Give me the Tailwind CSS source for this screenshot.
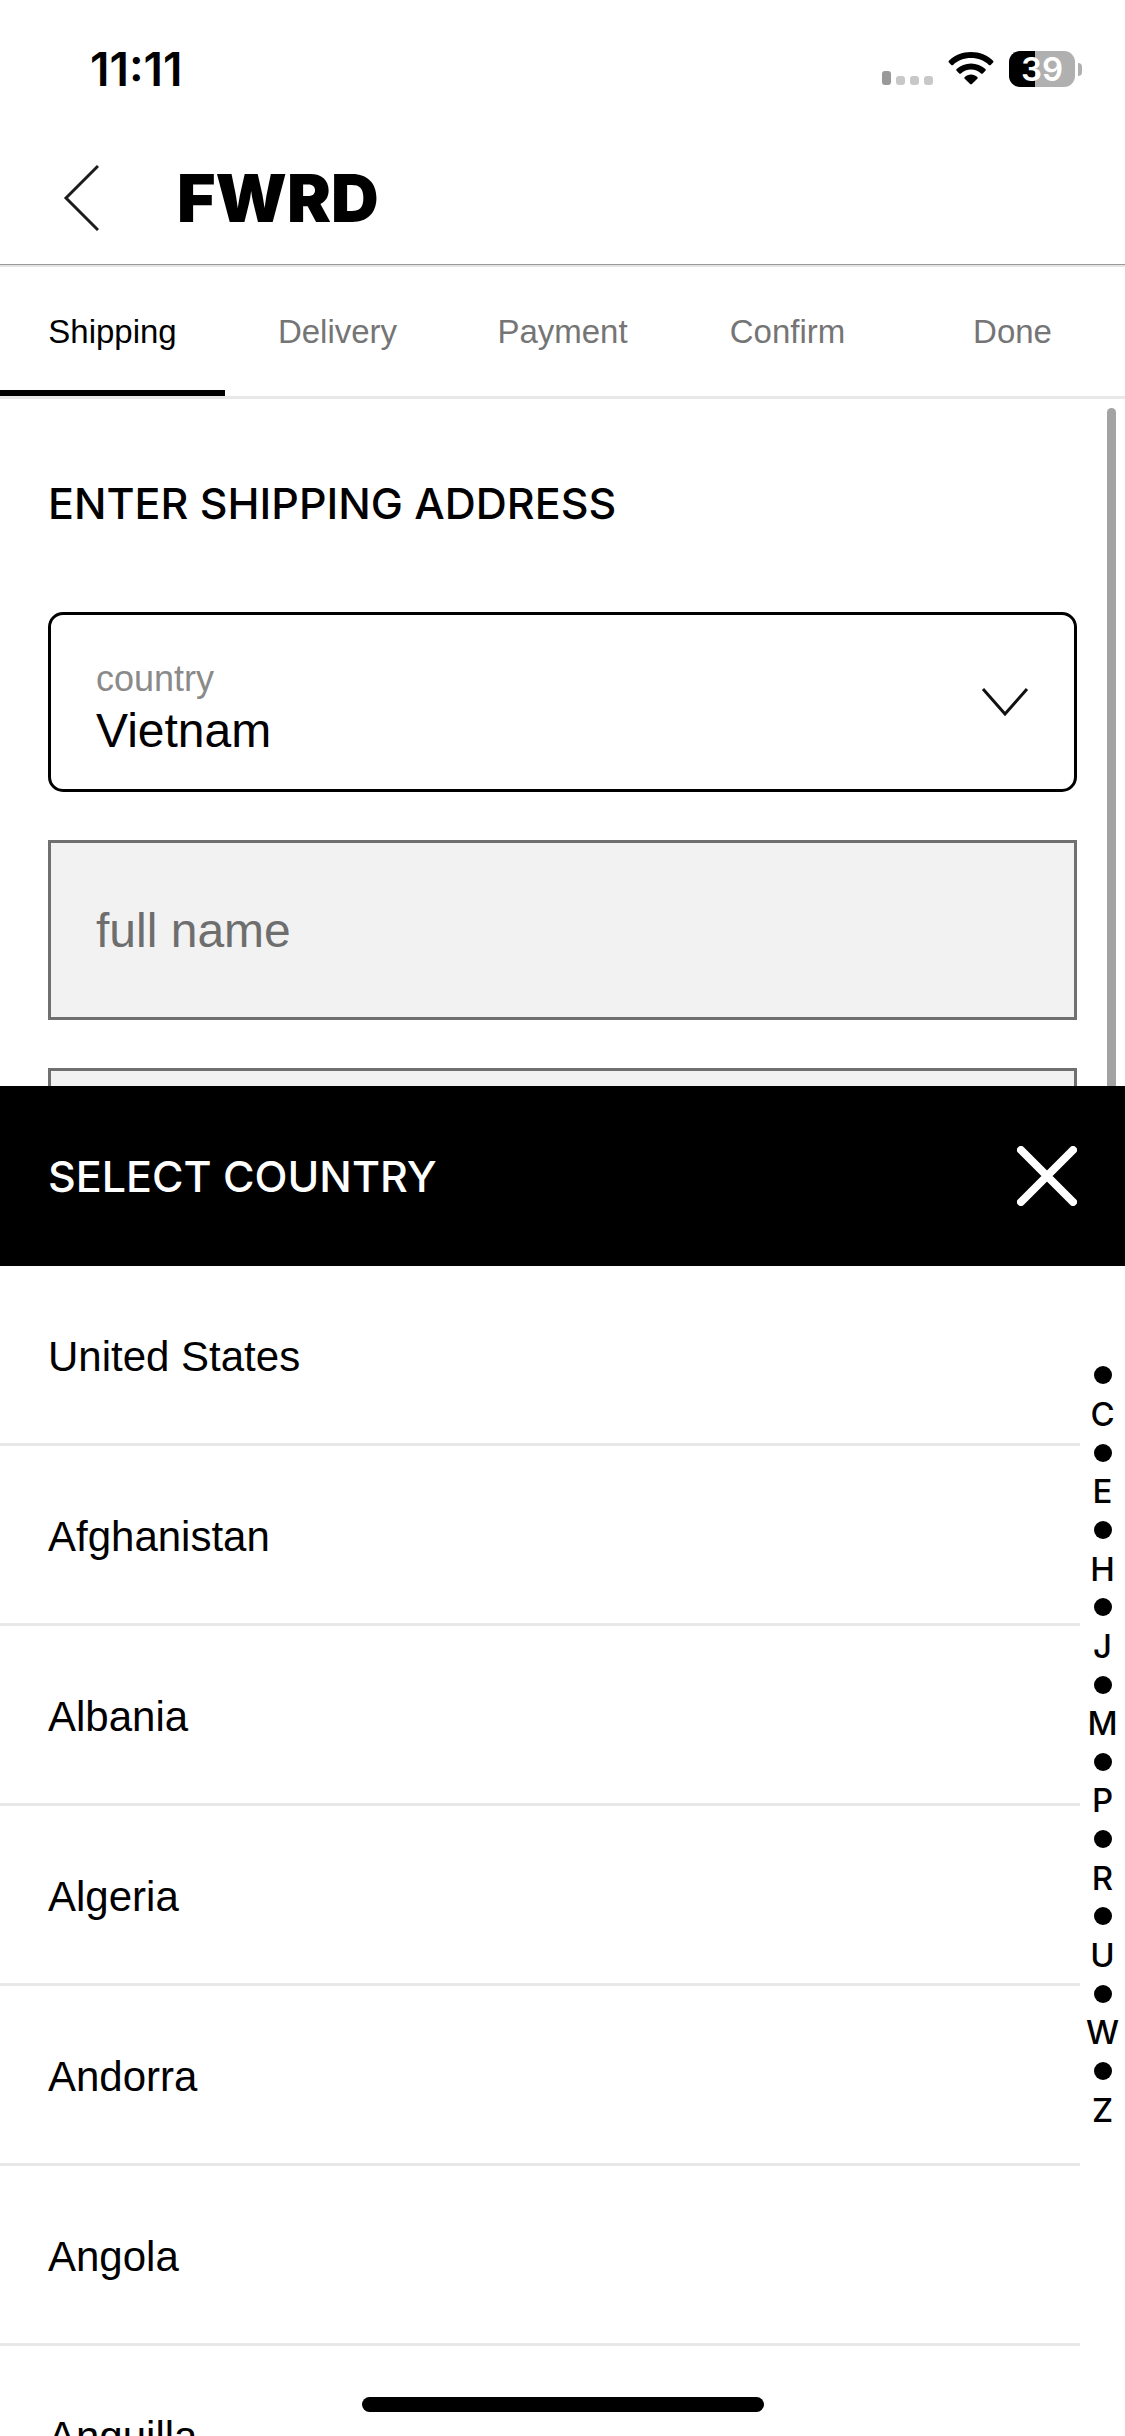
<!DOCTYPE html>
<html lang="en">
<head>
<meta charset="utf-8">
<meta name="viewport" content="width=device-width, initial-scale=1">
<title>FWRD – Shipping</title>
<script src="https://cdn.jsdelivr.net/npm/@tailwindcss/browser@4"></script>
</head>
<body class="relative flex h-screen flex-col overflow-hidden bg-white font-['Liberation_Sans',Arial,sans-serif] text-black">

<!-- Status bar -->
<div class="flex h-[132px] shrink-0 items-center justify-between pt-1.5 pr-[43px] pl-[90px] font-['Inter',sans-serif]">
  <span class="text-[46px] leading-none font-semibold">11:11</span>
  <div class="flex items-center gap-[15px]">
    <svg class="h-9 w-[51px]" viewBox="0 0 51 36" aria-hidden="true">
      <rect x="0" y="20" width="9" height="14" rx="3" fill="#999"/>
      <rect x="14" y="25" width="9" height="9" rx="3" fill="#c8c8c8"/>
      <rect x="28" y="25" width="9" height="9" rx="3" fill="#c8c8c8"/>
      <rect x="42" y="25" width="9" height="9" rx="3" fill="#c8c8c8"/>
    </svg>
    <svg class="h-9 w-[46px]" viewBox="0 0 46 36" aria-hidden="true">
      <path d="M23 1C14.300 1 6.500 4.400.9 9.700q-.9.900 0 1.800L3.300 13.900q.9.800 1.800 0C9.700 9.600 16 7 23 7s13.300 2.600 17.900 6.900q.9.800 1.800 0l2.400-2.400q.9-.9 0-1.800C39.500 4.400 31.700 1 23 1Z"/>
      <path d="M23 12.500c-5.500 0-10.600 2.100-14.400 5.500q-.9.900 0 1.800l2.600 2.600q.9.800 1.800 0C15.600 20 19.100 18.500 23 18.500s7.400 1.500 10 3.900q.9.800 1.800 0l2.600-2.600q.9-.9 0-1.800C33.600 14.600 28.500 12.500 23 12.500Z"/>
      <path d="M23 23.500c-2.400 0-4.600.9-6.300 2.400q-.9.900 0 1.800l5.400 5.400q.9.800 1.800 0l5.400-5.400q.9-.9 0-1.800c-1.700-1.500-3.900-2.400-6.300-2.400Z"/>
    </svg>
    <div class="flex items-center gap-[3px]">
      <div class="flex h-9 w-[66px] items-center justify-center rounded-[11px] bg-linear-to-r from-black from-[39%] to-[#b0b0b0] to-[39%] text-[33px] leading-none font-semibold text-white">39</div>
      <div class="h-[13px] w-1 rounded-r-full bg-[#b0b0b0]"></div>
    </div>
  </div>
</div>

<!-- App header -->
<header class="flex h-[133px] shrink-0 items-center gap-[78px] border-b border-[#999] pl-[63px]">
  <button type="button" aria-label="Back">
    <svg class="h-[66px] w-9" viewBox="0 0 36 66" fill="none" stroke="#1c1c1c" stroke-width="3"><path d="M35 1 3 33l32 32"/></svg>
  </button>
  <a href="#" class="font-['Inter',sans-serif] text-[66px] leading-none font-black">FWRD</a>
</header>

<!-- Checkout steps -->
<nav aria-label="Checkout steps" class="shrink-0 border-t-2 border-b-3 border-t-[#e5e5e5] border-b-[#e8e8e8]">
  <ol class="grid grid-cols-5 text-center text-[33px] leading-[48px] text-[#757575]">
    <li><a href="#" aria-current="step" class="block border-b-6 border-black pt-[41px] pb-[34px] text-black">Shipping</a></li>
    <li><a href="#" class="block pt-[41px] pb-10">Delivery</a></li>
    <li><a href="#" class="block pt-[41px] pb-10">Payment</a></li>
    <li><a href="#" class="block pt-[41px] pb-10">Confirm</a></li>
    <li><a href="#" class="block pt-[41px] pb-10">Done</a></li>
  </ol>
</nav>

<!-- Shipping form -->
<main class="relative min-h-0 flex-1 overflow-hidden px-12 pt-20">
  <h1 class="font-['Inter',sans-serif] text-[43px] leading-[48px] font-medium">ENTER SHIPPING ADDRESS</h1>
  <form class="mt-[85px] flex flex-col gap-12">
    <div class="flex h-[180px] items-center rounded-[15px] border-3 border-black pr-[45px] pl-[45px]">
      <div class="flex flex-1 flex-col pt-2.5">
        <label for="country" class="text-[36px] leading-[48px] text-[#8a8a8a]">country</label>
        <select id="country" class="h-14 w-full appearance-none bg-transparent text-[48px] leading-[56px] outline-none">
          <option>Vietnam</option>
          <option>United States</option>
        </select>
      </div>
      <svg class="h-7 w-12" viewBox="0 0 48 28" fill="none" stroke="#111" stroke-width="3" aria-hidden="true"><path d="m2 1 22 25L46 1"/></svg>
    </div>
    <input type="text" aria-label="full name" placeholder="full name" class="block h-[180px] w-full border-3 border-[#707070] bg-[#f2f2f2] px-[45px] text-[48px] placeholder:text-[#6e6e6e]">
    <input type="text" aria-label="address" class="block h-[180px] w-full border-3 border-[#707070] bg-[#f2f2f2] px-[45px] text-[48px]">
  </form>
  <!-- Scroll thumb -->
  <div class="absolute top-[9px] right-[9px] bottom-0 w-[9px] rounded-t-full bg-[#a3a3a3]"></div>
</main>

<!-- Country picker sheet -->
<section aria-labelledby="sheet-title" class="flex h-[1350px] shrink-0 flex-col">
  <div class="flex h-[180px] shrink-0 items-center justify-between bg-black px-12 text-white">
    <h2 id="sheet-title" class="font-['Inter',sans-serif] text-[43px] leading-[48px] font-medium">SELECT COUNTRY</h2>
    <button type="button" aria-label="Close">
      <svg class="size-15" viewBox="0 0 60 60" fill="none" stroke="currentColor" stroke-width="8" stroke-linecap="round"><path d="m4 4 52 52M56 4 4 56"/></svg>
    </button>
  </div>
  <div class="flex min-h-0 flex-1 overflow-hidden">
    <ul class="flex-1 text-[42px] leading-[48px]">
      <li class="border-b-3 border-[#e8e8e8]"><button type="button" class="block w-full pt-[67px] pb-[62px] pl-12 text-left">United States</button></li>
      <li class="border-b-3 border-[#e8e8e8]"><button type="button" class="block w-full pt-[67px] pb-[62px] pl-12 text-left">Afghanistan</button></li>
      <li class="border-b-3 border-[#e8e8e8]"><button type="button" class="block w-full pt-[67px] pb-[62px] pl-12 text-left">Albania</button></li>
      <li class="border-b-3 border-[#e8e8e8]"><button type="button" class="block w-full pt-[67px] pb-[62px] pl-12 text-left">Algeria</button></li>
      <li class="border-b-3 border-[#e8e8e8]"><button type="button" class="block w-full pt-[67px] pb-[62px] pl-12 text-left">Andorra</button></li>
      <li class="border-b-3 border-[#e8e8e8]"><button type="button" class="block w-full pt-[67px] pb-[62px] pl-12 text-left">Angola</button></li>
      <li class="border-b-3 border-[#e8e8e8]"><button type="button" class="block w-full pt-[67px] pb-[62px] pl-12 text-left">Anguilla</button></li>
    </ul>
    <nav aria-label="Alphabet index" class="mt-[90px] grid h-[773px] w-[45px] auto-rows-fr place-items-center font-['Inter',sans-serif] text-[33px] leading-[38px] font-medium">
      <span class="size-[18px] rounded-full bg-black"></span><a href="#">C</a>
      <span class="size-[18px] rounded-full bg-black"></span><a href="#">E</a>
      <span class="size-[18px] rounded-full bg-black"></span><a href="#">H</a>
      <span class="size-[18px] rounded-full bg-black"></span><a href="#">J</a>
      <span class="size-[18px] rounded-full bg-black"></span><a href="#">M</a>
      <span class="size-[18px] rounded-full bg-black"></span><a href="#">P</a>
      <span class="size-[18px] rounded-full bg-black"></span><a href="#">R</a>
      <span class="size-[18px] rounded-full bg-black"></span><a href="#">U</a>
      <span class="size-[18px] rounded-full bg-black"></span><a href="#">W</a>
      <span class="size-[18px] rounded-full bg-black"></span><a href="#">Z</a>
    </nav>
  </div>
</section>

<!-- Home indicator -->
<div class="absolute bottom-6 left-1/2 h-[15px] w-[402px] -translate-x-1/2 rounded-full bg-black"></div>
</body>
</html>
